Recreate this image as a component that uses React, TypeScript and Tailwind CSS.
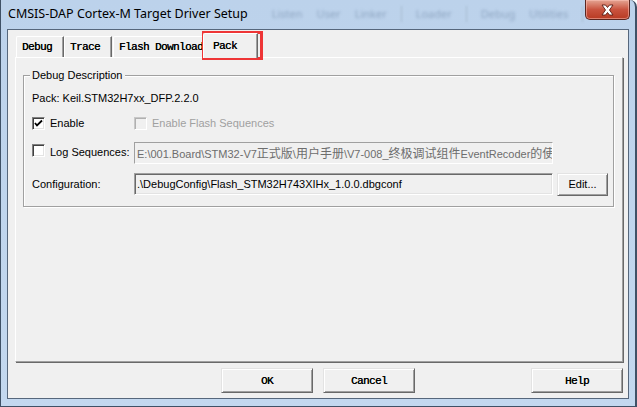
import React from "react";

const sys = "font-['Liberation_Sans',Arial,sans-serif] text-[11px] leading-[14px] text-black";
const mono = "font-['Liberation_Mono','Courier_New',monospace] text-[11px] leading-[14px] tracking-[-0.6px] text-black [text-shadow:0.35px_0_0_#000]";
const raised =
  "border border-t-[#e3e3e3] border-l-[#e3e3e3] border-b-[#696969] border-r-[#696969] shadow-[inset_1px_1px_0_#ffffff,inset_-1px_-1px_0_#a0a0a0] bg-[#f0f0f0]";
const sunken =
  "border border-t-[#a0a0a0] border-l-[#a0a0a0] border-b-white border-r-white shadow-[inset_1px_1px_0_#696969,inset_-1px_-1px_0_#e3e3e3] bg-[#f0f0f0]";
const sunkenDisabled =
  "border border-t-[#a0a0a0] border-l-[#a0a0a0] border-b-white border-r-white bg-[#f0f0f0]";

function CheckBox({ checked, disabled }: { checked?: boolean; disabled?: boolean }) {
  if (disabled) {
    return (
      <div className="w-[13px] h-[13px] shrink-0 border border-t-[#c8c8c8] border-l-[#c8c8c8] border-b-white border-r-white shadow-[inset_1px_1px_0_#b0b0b0] bg-[#f0f0f0]" />
    );
  }
  return (
    <div className="w-[13px] h-[13px] shrink-0 border border-t-[#808080] border-l-[#808080] border-b-white border-r-white shadow-[inset_1px_1px_0_#404040,inset_-1px_-1px_0_#e3e3e3] bg-white flex items-center justify-center">
      {checked && (
        <svg width="9" height="9" viewBox="0 0 9 9">
          <path d="M1 4 L3 6.5 L8 1.5" fill="none" stroke="#000" strokeWidth="1.8" />
        </svg>
      )}
    </div>
  );
}

function Tab({ label, w }: { label: string; w: string }) {
  return (
    <div
      className={`${w} h-[21px] shrink-0 border-t border-l border-t-white border-l-white border-r border-r-[#696969] shadow-[inset_-1px_0_0_#a0a0a0] rounded-tl-[2px] pl-[5px] flex items-center`}
    >
      <span className={mono}>{label}</span>
    </div>
  );
}

function Btn({ label }: { label: string }) {
  return (
    <div className={`${raised} w-[92px] h-[25px] flex items-center justify-center`}>
      <span className={mono}>{label}</span>
    </div>
  );
}

export default function App() {
  const blurItem = "font-['Noto_Sans',sans-serif] text-[11px] text-[#7088a6] blur-[1.8px] opacity-60";
  return (
    <div className="relative w-[637px] h-[407px] overflow-hidden flex flex-col bg-gradient-to-b from-[#bcd2eb] to-[#c3d8ef] border-l border-b border-r-2 border-[#3f5166] rounded-tr-[7px]">
      {/* Title bar */}
      <div className="h-[29px] shrink-0 flex items-start">
        <div className="pl-[7px] pt-[5px] font-['Noto_Sans','Open_Sans',sans-serif] text-[12.5px] leading-[18px] text-black whitespace-nowrap">
          CMSIS-DAP Cortex-M Target Driver Setup
        </div>
        <div className="flex items-center gap-[14px] pt-[6px] ml-[24px]">
          <span className={blurItem}>Listen</span>
          <span className={blurItem}>User</span>
          <span className={blurItem}>Linker</span>
          <span className="w-px h-[16px] bg-[#a9bcd1] blur-[1px]" />
          <span className={blurItem}>Loader</span>
          <span className="w-px h-[16px] bg-[#a9bcd1] blur-[1px]" />
          <span className={blurItem}>Debug</span>
          <span className={blurItem}>Utilities</span>
          <span className="w-px h-[16px] bg-[#a9bcd1] blur-[1px]" />
        </div>
        <div className="ml-auto mr-[5px] w-[45px] h-[20px] rounded-b-[5px] border border-t-0 border-[#5a2620] bg-gradient-to-b from-[#e3a493] via-[#c9533f] to-[#b83a22] shadow-[inset_0_0_0_1px_rgba(255,200,190,0.5)] flex items-center justify-center">
          <svg width="15" height="12" viewBox="0 0 15 12">
            <path
              d="M2 1 L5.5 1 L7.5 3.5 L9.5 1 L13 1 L9.5 6 L13 11 L9.5 11 L7.5 8.5 L5.5 11 L2 11 L5.5 6 Z"
              fill="#ffffff"
              stroke="#5a1c14"
              strokeWidth="0.9"
              strokeLinejoin="round"
            />
          </svg>
        </div>
      </div>

      {/* Client area */}
      <div className="ml-[6px] w-[622px] h-[370px] shrink-0 border border-[#56677c] bg-[#f0f0f0] flex flex-col">
        {/* Tabs */}
        <div className="h-[27px] shrink-0 flex items-end pl-[8px]">
          <Tab label="Debug" w="w-[48px]" />
          <Tab label="Trace" w="w-[48px]" />
          <div className="w-px shrink-0" />
          <Tab label="Flash Download" w="w-[92px]" />
          <div className="relative z-10 -ml-[2px] w-[55px] h-[25px] -mb-px shrink-0 bg-[#f0f0f0] border-t border-l border-t-white border-l-white border-r border-r-[#696969] shadow-[inset_-1px_0_0_#a0a0a0] rounded-tl-[2px] pl-[9px] flex items-center">
            <span className={mono}>Pack</span>
          </div>
        </div>

        {/* Tab panel */}
        <div className="ml-[7px] w-[608px] h-[305px] shrink-0 border-t border-l border-t-white border-l-white border-r border-b border-r-[#a0a0a0] border-b-[#a0a0a0] shadow-[1px_1px_0_#696969] pt-[17px] pl-[7px]">
          {/* Group box */}
          <div className="relative w-[591px] h-[132px] border border-[#a0a0a0] shadow-[inset_1px_1px_0_#ffffff,1px_1px_0_#ffffff] pt-[15px] pl-[8px] flex flex-col">
            <div className={`absolute -top-[8px] left-[6px] px-[2px] bg-[#f0f0f0] ${sys}`}>Debug Description</div>
            <div className={`${sys} h-[14px]`}>Pack: Keil.STM32H7xx_DFP.2.2.0</div>

            <div className="mt-[11px] h-[14px] flex items-center">
              <div className="w-[102px] flex items-center">
                <CheckBox checked />
                <span className={`${sys} ml-[5px]`}>Enable</span>
              </div>
              <CheckBox disabled />
              <span className={`${sys} ml-[5px] !text-[#a0a0a0]`}>Enable Flash Sequences</span>
            </div>

            <div className="mt-[12px] h-[22px] flex items-center">
              <div className="w-[102px] flex items-center -mt-[5px]">
                <CheckBox />
                <span className={`${sys} ml-[5px] mt-[2px]`}>Log Sequences:</span>
              </div>
              <div className={`${sunkenDisabled} w-[419px] h-[22px] flex items-center pl-[2px] overflow-hidden whitespace-nowrap`}>
                <span className={`${sys} !text-[#6d6d6d]`}>
                  {"E:\\001.Board\\STM32-V7"}
                  <span className="font-['Noto_Sans_CJK_SC',sans-serif] text-[12px]">正式版</span>
                  {"\\"}
                  <span className="font-['Noto_Sans_CJK_SC',sans-serif] text-[12px]">用户手册</span>
                  {"\\V7-008_"}
                  <span className="font-['Noto_Sans_CJK_SC',sans-serif] text-[12px]">终极调试组件</span>
                  {"EventRecoder"}
                  <span className="font-['Noto_Sans_CJK_SC',sans-serif] text-[12px]">的使</span>
                </span>
              </div>
            </div>

            <div className="mt-[9px] h-[22px] flex items-center">
              <div className={`${sys} w-[102px]`}>Configuration:</div>
              <div className={`${sunken} w-[419px] h-[22px] flex items-center pl-[2px] overflow-hidden whitespace-nowrap`}>
                <span className={sys}>{".\\DebugConfig\\Flash_STM32H743XIHx_1.0.0.dbgconf"}</span>
              </div>
              <div className={`${raised} ml-[4px] w-[51px] h-[23px] flex items-center justify-center`}>
                <span className={sys}>Edit...</span>
              </div>
            </div>
          </div>
        </div>

        {/* Buttons */}
        <div className="mt-[6px] flex">
          <div className="ml-[213px]">
            <Btn label="OK" />
          </div>
          <div className="ml-[10px]">
            <Btn label="Cancel" />
          </div>
          <div className="ml-[116px]">
            <Btn label="Help" />
          </div>
        </div>
      </div>

      {/* Red annotation box */}
      <div className="absolute left-[201px] top-[31px] w-[61px] h-[29px] border-[3px] border-[#ee3536]" />
    </div>
  );
}
